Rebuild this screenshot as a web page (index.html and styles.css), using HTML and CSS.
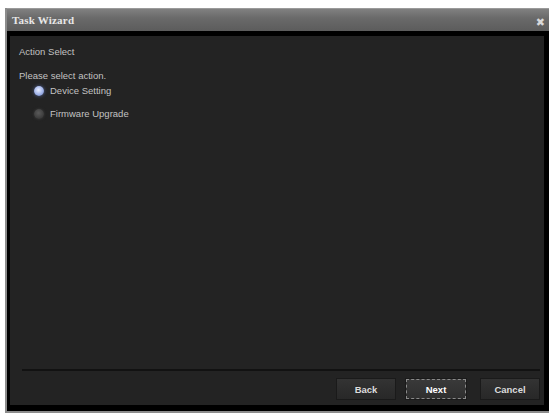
FILE: index.html
```html
<!DOCTYPE html>
<html>
<head>
<meta charset="utf-8">
<link rel="stylesheet" href="styles.css">
</head>
<body>
<div class="dialog">
  <div class="titlebar">
    <span class="title">Task Wizard</span>
    <span class="close">&#x2716;</span>
  </div>
  <div class="frame">
    <div class="panel">
      <div class="content">
        <div class="heading">Action Select</div>
        <div class="prompt">Please select action.</div>
        <div class="options">
          <label class="option"><span class="radio on"></span><span>Device Setting</span></label>
          <label class="option"><span class="radio"></span><span>Firmware Upgrade</span></label>
        </div>
      </div>
      <div class="footer">
        <button class="btn">Back</button>
        <button class="btn focus">Next</button>
        <button class="btn">Cancel</button>
      </div>
    </div>
  </div>
</div>
</body>
</html>
```
FILE: styles.css
```css
html, body { margin: 0; padding: 0; background: #ffffff; }
body { width: 554px; height: 415px; overflow: hidden; font-family: "Liberation Sans", Arial, sans-serif; }

.dialog {
  margin: 8px 5px 0 5px;
  height: 405px;
  display: flex;
  flex-direction: column;
  border-left: 2px solid #8c8c8c;
  border-bottom: 2px solid #8c8c8c;
  box-sizing: border-box;
  background: #000;
}

.titlebar {
  height: 23px;
  flex: none;
  display: flex;
  align-items: center;
  justify-content: space-between;
  padding: 0 4px 0 5px;
  background: linear-gradient(#808080, #6a6a6a 40%, #5c5c5c);
  border-top: 1px solid #9a9a9a;
  box-sizing: border-box;
}
.title {
  color: #e8e8e8;
  font-family: "Liberation Serif", "Times New Roman", serif;
  font-weight: bold;
  font-size: 11px;
  letter-spacing: 0.2px;
}
.close {
  color: #d8d8d8;
  font-size: 11px;
  font-family: "DejaVu Sans", sans-serif;
  margin-top: 4px;
}

.frame {
  flex: 1;
  padding: 5px 5px 6px 3px;
  display: flex;
  background: #000;
}
.panel {
  flex: 1;
  background: #232323;
  display: flex;
  flex-direction: column;
}

.content {
  flex: 1;
  padding: 9px 9px 0 9px;
  color: #c2c2c2;
  font-size: 9.5px;
}
.heading { margin-top: 1px; }
.prompt { margin-top: 13px; }
.options {
  display: flex;
  flex-direction: column;
  gap: 12px;
  margin-top: 4px;
  padding-left: 15px;
}
.option { display: flex; align-items: center; gap: 6px; }
.radio {
  width: 10px; height: 10px;
  border-radius: 50%;
  background: radial-gradient(circle at 45% 40%, #5a5a5a, #3a3a3a 70%);
  box-shadow: 0 0 2px 1px #2e2e2e;
}
.radio.on {
  background: radial-gradient(circle at 45% 40%, #e8eeff, #9fb2e8 55%, #5a6fa8);
  box-shadow: 0 0 3px 1px #3c4560;
}

.footer {
  margin: 0 4px 0 12px;
  border-top: 2px solid #121212;
  display: flex;
  justify-content: flex-end;
  gap: 9px;
  padding: 7px 0 5px 0;
}
.btn {
  width: 60px;
  height: 22px;
  font-family: "Liberation Sans", Arial, sans-serif;
  font-size: 9.5px;
  font-weight: bold;
  color: #dcdcdc;
  background: linear-gradient(#333333, #282828);
  border: 1px solid #1a1a1a;
  padding: 0;
}
.btn.focus {
  width: 62px;
  outline: 1px dashed #8a8a8a;
  outline-offset: -2px;
  background: linear-gradient(#3a3a3a, #2e2e2e);
  color: #ffffff;
  margin-right: 4px;
}
```
